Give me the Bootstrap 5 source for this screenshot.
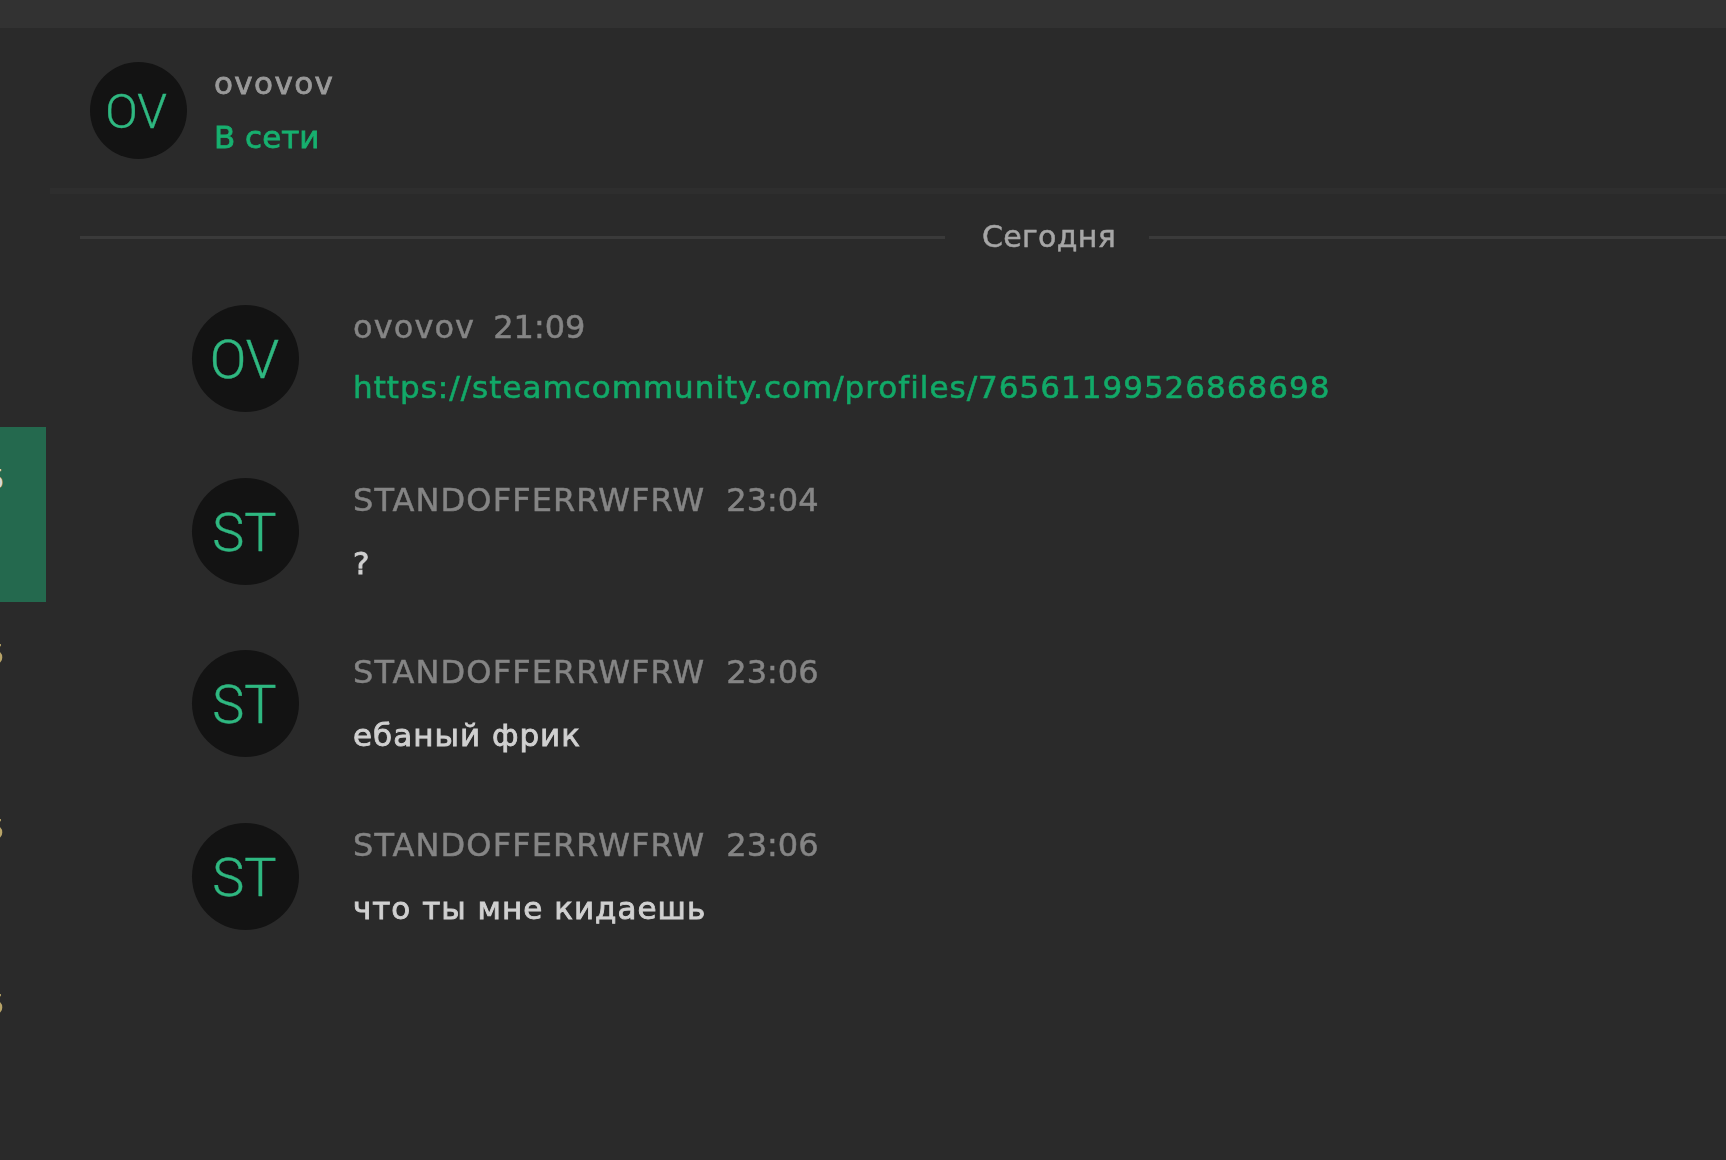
<!DOCTYPE html>
<html lang="ru">
<head>
<meta charset="utf-8">
<title>Чат</title>
<link rel="stylesheet" href="https://cdn.jsdelivr.net/npm/bootstrap@5.3.0/dist/css/bootstrap.min.css">
<style>
html,body{height:100%;}
body{background:#2a2a2a;font-family:"DejaVu Sans","Liberation Sans",sans-serif;overflow:hidden;}
.topstrip{height:28px;background:#323232;}
.shell{height:1132px;filter:blur(.7px);}
.rail{width:46px;padding-top:399px;}
.rail-item{height:175px;overflow:hidden;font-size:26px;line-height:1;}
.rail-item span{display:block;margin-left:-12px;padding-top:40px;}
.rail-on{background:#24694e;color:#d8d8d8;}
.rail-off{color:#b8a468;}
.pane{padding-left:4px;min-width:0;overflow:hidden;}
.chat-head{height:166px;padding-left:40px;padding-top:4px;border-bottom:6px solid #2e2e2e;gap:27px;}
.disc{border-radius:50%;background:#131313;color:#2fb881;font-family:"Roboto",sans-serif;font-weight:300;line-height:1;padding-top:3px;-webkit-text-stroke:.4px #2fb881;}
.disc-sm{width:97px;height:97px;font-size:48px;padding-right:5px;}
.disc-lg{width:107px;height:107px;font-size:54px;padding-right:2px;}
.peer{font-size:31px;line-height:1;color:#9a9a9a;letter-spacing:1.4px;-webkit-text-stroke:.8px #9a9a9a;}
.state{font-size:31px;line-height:1;color:#17b06f;margin-top:23px;-webkit-text-stroke:.8px #17b06f;}
.day{margin-left:30px;margin-top:21px;height:44px;gap:37px;}
.day i{height:3px;background:#3a3a3a;display:block;}
.day i:first-child{width:865px;flex:none;}
.day i:last-child{flex:1;}
.day b{font-weight:400;font-size:30px;color:#a6a6a6;line-height:1;letter-spacing:.3px;margin-right:-4px;-webkit-text-stroke:.5px #a6a6a6;}
.feed{padding:46px 0 0 142px;}
.msg{height:172.5px;gap:54px;}
.who{font-size:32px;line-height:1;color:#858585;margin-top:6px;letter-spacing:1.1px;-webkit-text-stroke:.5px #858585;}
.who span{margin-left:21px;letter-spacing:0;}
.who-near span{margin-left:18px;}
.txt{font-size:31px;line-height:1;color:#d0d0d0;margin-top:32px;letter-spacing:1px;-webkit-text-stroke:.9px #d0d0d0;}
.txt-link{margin-top:29px;}
.txt a{color:#12a968;text-decoration:none;-webkit-text-stroke:.6px #12a968;}
</style>
</head>
<body>
<div class="topstrip"></div>
<div class="shell d-flex">
  <div class="rail flex-shrink-0">
    <div class="rail-item rail-on"><span>5</span></div>
    <div class="rail-item rail-off"><span>5</span></div>
    <div class="rail-item rail-off"><span>5</span></div>
    <div class="rail-item rail-off"><span>5</span></div>
  </div>
  <div class="pane flex-grow-1">
    <div class="chat-head d-flex align-items-center">
      <div class="disc disc-sm d-flex align-items-center justify-content-center flex-shrink-0">OV</div>
      <div>
        <div class="peer">ovovov</div>
        <div class="state">В сети</div>
      </div>
    </div>
    <div class="day d-flex align-items-center"><i></i><b>Сегодня</b><i></i></div>
    <div class="feed">
      <div class="msg d-flex">
        <div class="disc disc-lg d-flex align-items-center justify-content-center flex-shrink-0">OV</div>
        <div><div class="who who-near">ovovov<span>21:09</span></div><div class="txt txt-link"><a href="#">https://steamcommunity.com/profiles/76561199526868698</a></div></div>
      </div>
      <div class="msg d-flex">
        <div class="disc disc-lg d-flex align-items-center justify-content-center flex-shrink-0">ST</div>
        <div><div class="who">STANDOFFERRWFRW<span>23:04</span></div><div class="txt">?</div></div>
      </div>
      <div class="msg d-flex">
        <div class="disc disc-lg d-flex align-items-center justify-content-center flex-shrink-0">ST</div>
        <div><div class="who">STANDOFFERRWFRW<span>23:06</span></div><div class="txt">ебаный фрик</div></div>
      </div>
      <div class="msg d-flex">
        <div class="disc disc-lg d-flex align-items-center justify-content-center flex-shrink-0">ST</div>
        <div><div class="who">STANDOFFERRWFRW<span>23:06</span></div><div class="txt">что ты мне кидаешь</div></div>
      </div>
    </div>
  </div>
</div>
<script src="https://cdn.jsdelivr.net/npm/bootstrap@5.3.0/dist/js/bootstrap.bundle.min.js"></script>
</body>
</html>
